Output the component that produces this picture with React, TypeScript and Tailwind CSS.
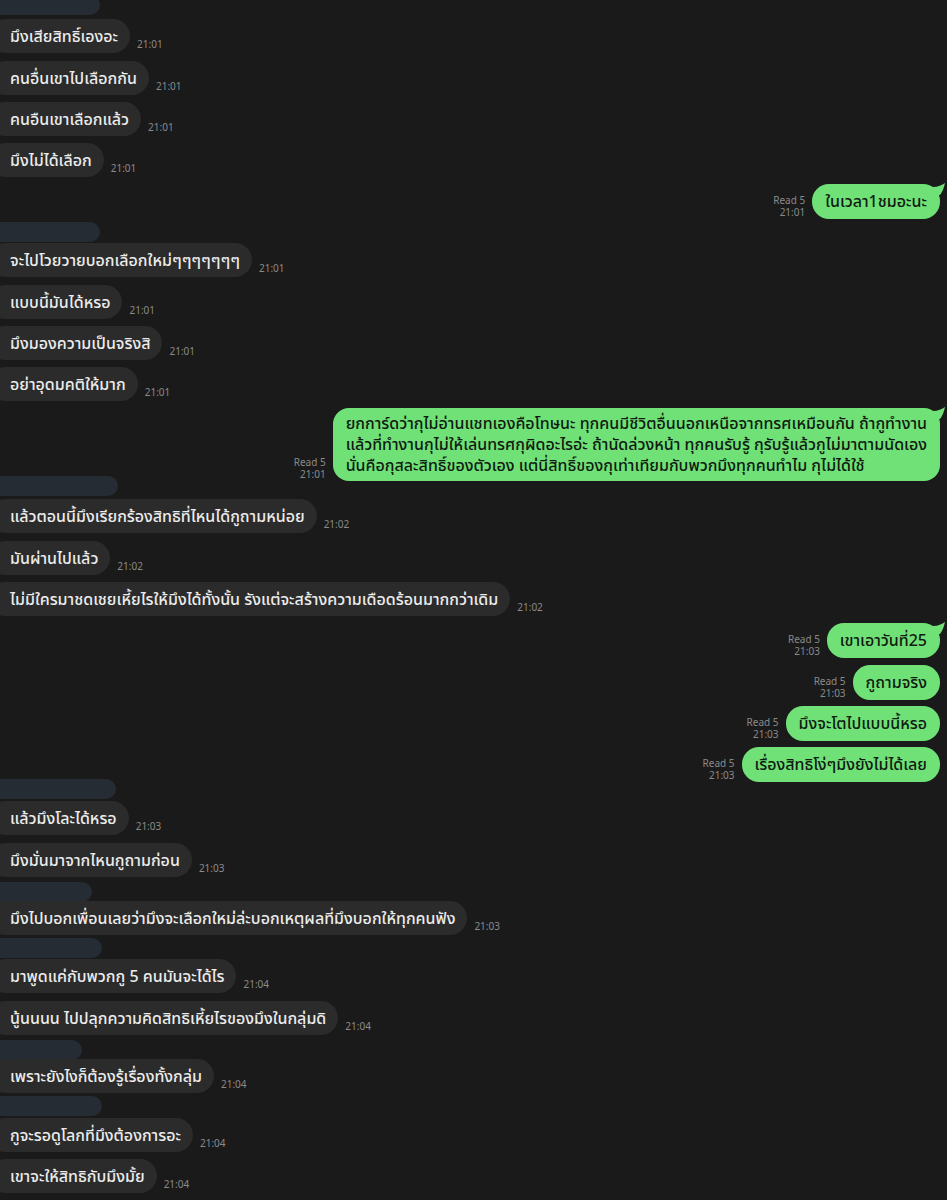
import React from 'react';

type Item =
  | { kind: 'name'; w: string; mt: string }
  | { kind: 'in'; text: string; time: string; mt: string }
  | { kind: 'out'; lines: string[]; time: string; mt: string; tail?: boolean };

const items: Item[] = [
  { kind: 'name', w: 'w-[100px]', mt: '-mt-[5px]' },
  { kind: 'in', text: 'มึงเสียสิทธิ์เองอะ', time: '21:01', mt: 'mt-[4px]' },
  { kind: 'in', text: 'คนอื่นเขาไปเลือกกัน', time: '21:01', mt: 'mt-[8px]' },
  { kind: 'in', text: 'คนอืนเขาเลือกแล้ว', time: '21:01', mt: 'mt-[7px]' },
  { kind: 'in', text: 'มึงไม่ได้เลือก', time: '21:01', mt: 'mt-[7px]' },
  { kind: 'out', lines: ['ในเวลา1ชมอะนะ'], time: '21:01', mt: 'mt-[7px]', tail: true },
  { kind: 'name', w: 'w-[100px]', mt: 'mt-[3px]' },
  { kind: 'in', text: 'จะไปโวยวายบอกเลือกใหม่ๆๆๆๆๆๆๆ', time: '21:01', mt: 'mt-[1px]' },
  { kind: 'in', text: 'แบบนี้มันได้หรอ', time: '21:01', mt: 'mt-[8px]' },
  { kind: 'in', text: 'มึงมองความเป็นจริงสิ', time: '21:01', mt: 'mt-[7px]' },
  { kind: 'in', text: 'อย่าอุดมคติให้มาก', time: '21:01', mt: 'mt-[7px]' },
  {
    kind: 'out',
    lines: [
      'ยกการ์ดว่ากุไม่อ่านแชทเองคือโทษนะ ทุกคนมีชีวิตอื่นนอกเหนือจากทรศเหมือนกัน ถ้ากูทำงาน',
      'แล้วที่ทำงานกุไม่ให้เล่นทรศกุผิดอะไรอ่ะ ถ้านัดล่วงหน้า ทุกคนรับรู้ กุรับรู้แล้วกูไม่มาตามนัดเอง',
      'นั่นคือกุสละสิทธิ์ของตัวเอง แต่นี่สิทธิ์ของกุเท่าเทียมกับพวกมึงทุกคนทำไม กุไม่ได้ใช้',
    ],
    time: '21:01',
    mt: 'mt-[7px]',
    tail: true,
  },
  { kind: 'name', w: 'w-[118px]', mt: '-mt-[5px]' },
  { kind: 'in', text: 'แล้วตอนนี้มึงเรียกร้องสิทธิที่ไหนได้กูถามหน่อย', time: '21:02', mt: 'mt-[3px]' },
  { kind: 'in', text: 'มันผ่านไปแล้ว', time: '21:02', mt: 'mt-[8px]' },
  { kind: 'in', text: 'ไม่มีใครมาชดเชยเหี้ยไรให้มึงได้ทั้งนั้น รังแต่จะสร้างความเดือดร้อนมากกว่าเดิม', time: '21:02', mt: 'mt-[7px]' },
  { kind: 'out', lines: ['เขาเอาวันที่25'], time: '21:03', mt: 'mt-[7px]', tail: true },
  { kind: 'out', lines: ['กูถามจริง'], time: '21:03', mt: 'mt-[7px]' },
  { kind: 'out', lines: ['มึงจะโตไปแบบนี้หรอ'], time: '21:03', mt: 'mt-[6px]' },
  { kind: 'out', lines: ['เรื่องสิทธิโง่ๆมึงยังไม่ได้เลย'], time: '21:03', mt: 'mt-[6px]' },
  { kind: 'name', w: 'w-[116px]', mt: '-mt-[3px]' },
  { kind: 'in', text: 'แล้วมึงโละได้หรอ', time: '21:03', mt: 'mt-[2px]' },
  { kind: 'in', text: 'มึงมั่นมาจากไหนกูถามก่อน', time: '21:03', mt: 'mt-[8px]' },
  { kind: 'name', w: 'w-[92px]', mt: 'mt-[5px]' },
  { kind: 'in', text: 'มึงไปบอกเพื่อนเลยว่ามึงจะเลือกใหม่ล่ะบอกเหตุผลที่มึงบอกให้ทุกคนฟัง', time: '21:03', mt: '-mt-[1px]' },
  { kind: 'name', w: 'w-[102px]', mt: 'mt-[3px]' },
  { kind: 'in', text: 'มาพูดแค่กับพวกกู 5 คนมันจะได้ไร', time: '21:04', mt: 'mt-[1px]' },
  { kind: 'in', text: 'นู้นนนน ไปปลุกความคิดสิทธิเหี้ยไรของมึงในกลุ่มดิ', time: '21:04', mt: 'mt-[8px]' },
  { kind: 'name', w: 'w-[82px]', mt: 'mt-[5px]' },
  { kind: 'in', text: 'เพราะยังไงก็ต้องรู้เรื่องทั้งกลุ่ม', time: '21:04', mt: '-mt-[1px]' },
  { kind: 'name', w: 'w-[102px]', mt: 'mt-[3px]' },
  { kind: 'in', text: 'กูจะรอดูโลกที่มึงต้องการอะ', time: '21:04', mt: 'mt-[2px]' },
  { kind: 'in', text: 'เขาจะให้สิทธิกับมึงมั้ย', time: '21:04', mt: 'mt-[7px]' },
];

const Tail = () => (
  <svg className="absolute -top-[1px] -right-[5px]" width="12" height="12" viewBox="0 0 12 12">
    <path d="M0 4 C5 4 9 2 12 0 C11 4 10 8 7 12 L0 12 Z" fill="#70e177" />
  </svg>
);

export default function App() {
  return (
    <div
      className="w-[947px] h-[1200px] overflow-hidden bg-[#1a1a1a] flex flex-col"
      style={{ fontFamily: '"Noto Sans", "Noto Sans Thai", "Liberation Sans", sans-serif' }}
    >
      {items.map((it, i) => {
        if (it.kind === 'name') {
          return <div key={i} className={`${it.mt} ${it.w} h-[20px] shrink-0 rounded-r-full bg-[#262c33]`} />;
        }
        if (it.kind === 'in') {
          return (
            <div key={i} className={`${it.mt} flex items-end gap-[7px] shrink-0`}>
              <div className="-ml-[12px] rounded-[17px] bg-[#2b2b2b] pl-[22px] pr-[12px] py-[6px] text-[16px] font-medium leading-[22px] text-[#ececec] whitespace-nowrap">
                {it.text}
              </div>
              <span className="pb-[3px] text-[10px] leading-[12px] text-[#8a8a8a]">{it.time}</span>
            </div>
          );
        }
        return (
          <div key={i} className={`${it.mt} flex items-end justify-end gap-[7px] pr-[7px] shrink-0`}>
            <div className="pb-[1px] flex flex-col items-end text-[10px] leading-[12px] text-[#8a8a8a]">
              <span>Read 5</span>
              <span>{it.time}</span>
            </div>
            <div
              className={`relative bg-[#70e177] px-[13px] text-[16px] font-medium text-[#0f1a10] whitespace-nowrap ${
                it.lines.length > 1 ? 'py-[5px] leading-[21px] rounded-[16px]' : 'py-[6px] leading-[23px] rounded-[17px]'
              }`}
            >
              {it.tail && <Tail />}
              {it.lines.map((l, j) => (
                <div key={j}>{l}</div>
              ))}
            </div>
          </div>
        );
      })}
    </div>
  );
}
